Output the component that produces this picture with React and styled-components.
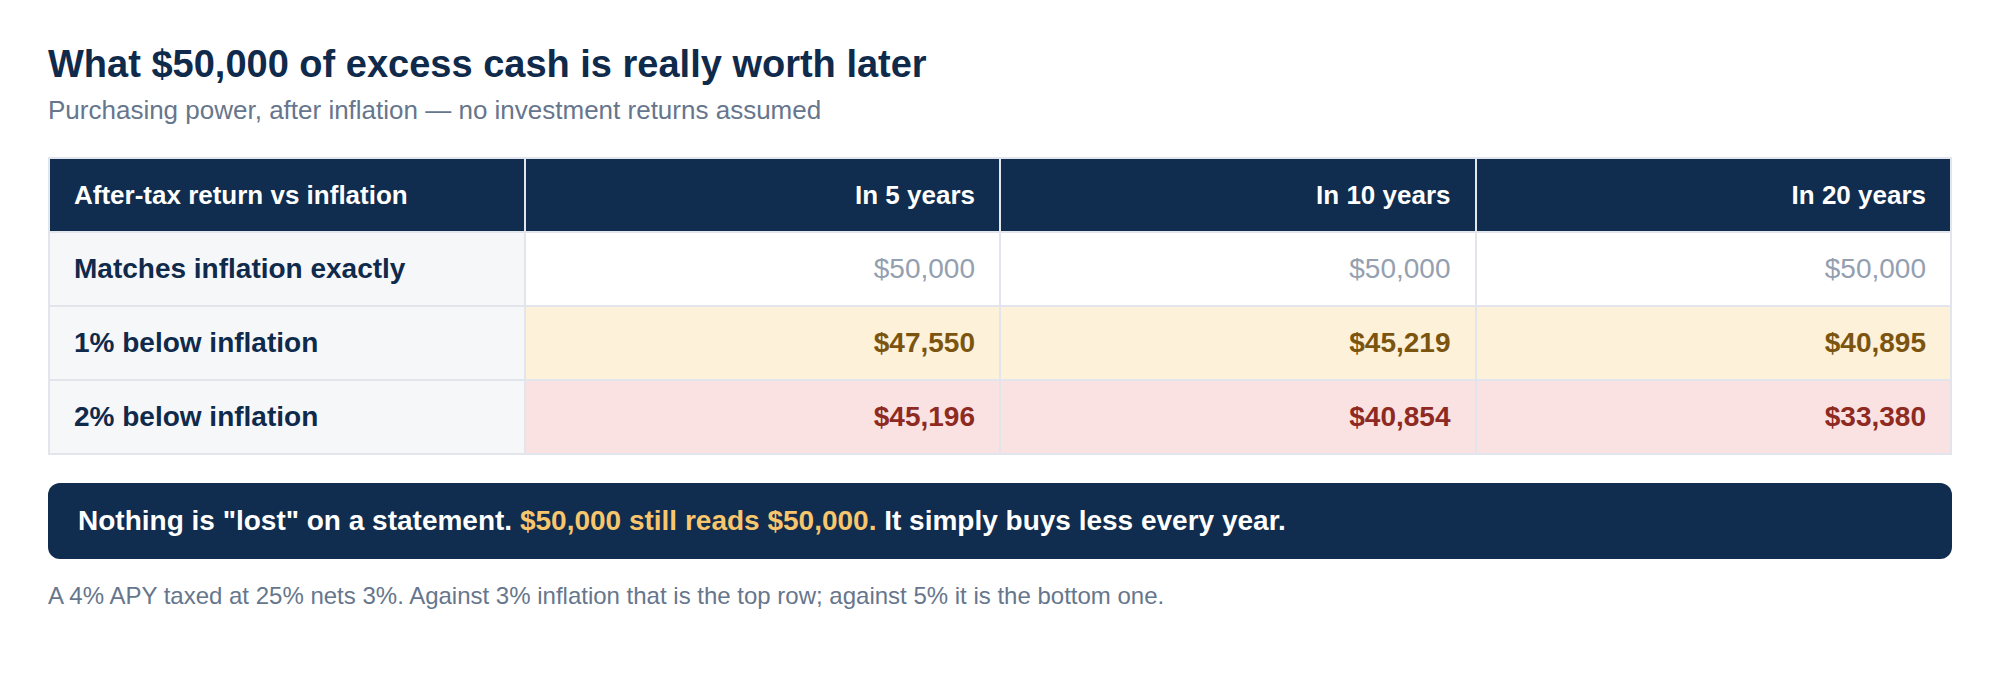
import React from "react";
import styled, { createGlobalStyle } from "styled-components";

const rows = [
	{
		label: "Matches inflation exactly",
		tone: "flat",
		values: ["$50,000", "$50,000", "$50,000"]
	},
	{
		label: "1% below inflation",
		tone: "warn",
		values: ["$47,550", "$45,219", "$40,895"]
	},
	{
		label: "2% below inflation",
		tone: "loss",
		values: ["$45,196", "$40,854", "$33,380"]
	}
];

const tones = {
	flat: { bg: "#ffffff", color: "#94a0b0", weight: 400 },
	warn: { bg: "#fdf1d9", color: "#7b5510", weight: 700 },
	loss: { bg: "#f9e2e1", color: "#8e2a22", weight: 700 }
};

function App() {
	return (
		<>
			<GlobalStyle />
			<Page>
				<Title>What $50,000 of excess cash is really worth later</Title>
				<Subtitle>
					Purchasing power, after inflation — no investment returns assumed
				</Subtitle>
				<Table>
					<thead>
						<tr>
							<HeadCell>After-tax return vs inflation</HeadCell>
							<HeadCell $right>In 5 years</HeadCell>
							<HeadCell $right>In 10 years</HeadCell>
							<HeadCell $right>In 20 years</HeadCell>
						</tr>
					</thead>
					<tbody>
						{rows.map((row) => (
							<tr key={row.label}>
								<LabelCell>{row.label}</LabelCell>
								{row.values.map((v, i) => (
									<ValueCell key={i} $tone={row.tone}>
										{v}
									</ValueCell>
								))}
							</tr>
						))}
					</tbody>
				</Table>
				<Callout>
					Nothing is "lost" on a statement.{" "}
					<Highlight>$50,000 still reads $50,000.</Highlight> It simply buys
					less every year.
				</Callout>
				<Note>
					A 4% APY taxed at 25% nets 3%. Against 3% inflation that is the top
					row; against 5% it is the bottom one.
				</Note>
			</Page>
		</>
	);
}

export default App;

const GlobalStyle = createGlobalStyle`
	body {
		margin: 0;
		background: #ffffff;
		font-family: "Liberation Sans", Arial, sans-serif;
	}
`;

const Page = styled.div`
	padding: 41px 48px;
	display: flex;
	flex-direction: column;
`;

const Title = styled.h1`
	margin: 0;
	font-size: 38px;
	line-height: 46px;
	font-weight: 700;
	color: #0f2a4b;
`;

const Subtitle = styled.p`
	margin: 5px 0 0;
	font-size: 26px;
	line-height: 36px;
	color: #66768c;
`;

const Table = styled.table`
	margin-top: 29px;
	width: 100%;
	table-layout: fixed;
	border-collapse: collapse;
	border: 2px solid #e2e6ec;
`;

const Cell = styled.td`
	border: 2px solid #e2e6ec;
	height: 74px;
	padding: 0 24px;
	box-sizing: border-box;
	line-height: 38px;
	white-space: nowrap;
`;

const HeadCell = styled(Cell).attrs({ as: "th" })`
	background: #102c4e;
	color: #ffffff;
	font-size: 26px;
	font-weight: 700;
	text-align: ${(p) => (p.$right ? "right" : "left")};
`;

const LabelCell = styled(Cell)`
	background: #f6f7f9;
	color: #0f2a4b;
	font-size: 28px;
	font-weight: 700;
`;

const ValueCell = styled(Cell)`
	background: ${(p) => tones[p.$tone].bg};
	color: ${(p) => tones[p.$tone].color};
	font-weight: ${(p) => tones[p.$tone].weight};
	font-size: 28px;
	text-align: right;
`;

const Callout = styled.div`
	margin-top: 28px;
	background: #102c4e;
	border-radius: 12px;
	padding: 19px 30px;
	color: #ffffff;
	font-size: 28px;
	line-height: 38px;
	font-weight: 700;
`;

const Highlight = styled.span`
	color: #f8c66c;
`;

const Note = styled.p`
	margin: 19px 0 0;
	font-size: 24px;
	line-height: 36px;
	color: #66768c;
`;
